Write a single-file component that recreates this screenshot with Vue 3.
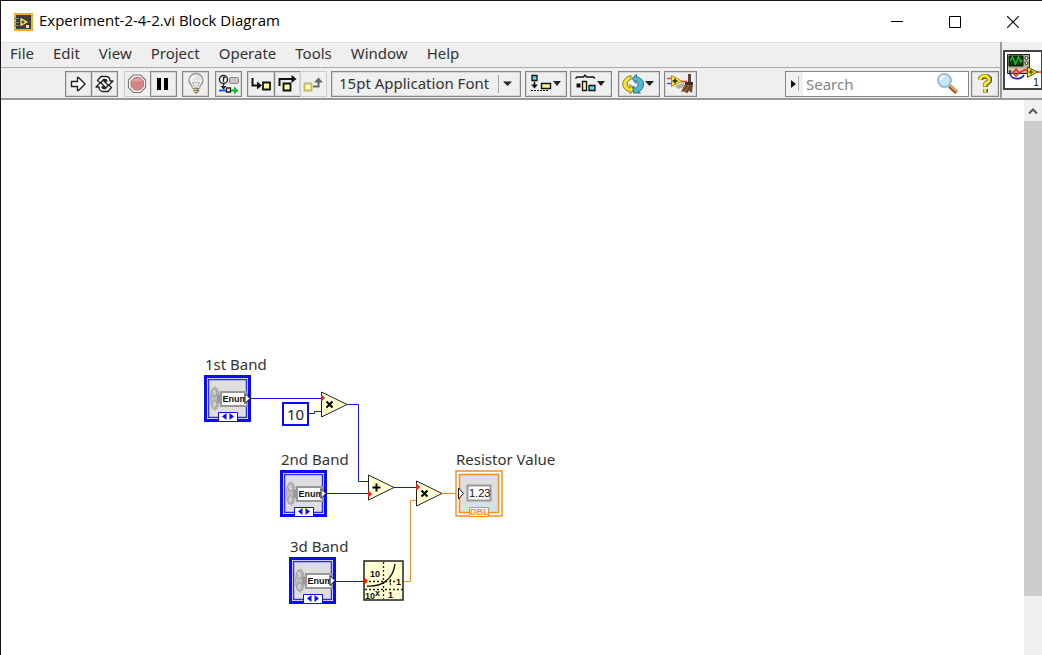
<script setup>
import { ref } from 'vue'

const menus = ['File', 'Edit', 'View', 'Project', 'Operate', 'Tools', 'Window', 'Help']
const font = ref('15pt Application Font')
const query = ref('')

const enums = [
  { label: '1st Band', x: 203, y: 275 },
  { label: '2nd Band', x: 279, y: 370 },
  { label: '3d Band', x: 288, y: 457 }
]
const operators = [
  { name: 'Multiply', x: 319, y: 291, sign: 'x', dots: [7] },
  { name: 'Add', x: 366, y: 374, sign: '+', dots: [20] },
  { name: 'Multiply', x: 414, y: 380, sign: 'x', dots: [7] }
]
const wires = [
  { kind: 'int', points: '249,298.5 321,298.5' },
  { kind: 'int', points: '308,313.5 313.5,313.5 313.5,311.5 321,311.5' },
  { kind: 'int', points: '345,304.5 357.5,304.5 357.5,381.5 368,381.5' },
  { kind: 'int', points: '325,393.5 368,393.5' },
  { kind: 'int', points: '392,387.5 416,387.5' },
  { kind: 'int', points: '334,481.5 364,481.5' },
  { kind: 'dbl', points: '440,393.5 456,393.5' },
  { kind: 'dbl', points: '402,481.5 409.5,481.5 409.5,400.5 416,400.5' }
]
const at = (n) => ({ left: n.x + 'px', top: n.y + 'px' })
</script>

<template>
  <div class="window">
    <header class="titlebar">
      <svg class="app-icon" width="19" height="18" viewBox="0 0 19 18">
        <rect x="1" y="1" width="17" height="16" fill="#3b3d40" stroke="#efb02c" stroke-width="2" />
        <path d="M0 5.5h5M0 9.5h5M0 12.5h5" stroke="#5c8fa8" />
        <path d="M6 4l9 5-9 5z" fill="#f6d66b" stroke="#1d1d1d" stroke-width=".6" />
        <path d="M7.500 9h3M9 7.500v3" stroke="#222" />
        <path d="M12 12h3v3h-3z" fill="#ddd" />
      </svg>
      <h1>Experiment-2-4-2.vi Block Diagram</h1>
      <div class="caption-buttons">
        <button aria-label="Minimize"><svg width="12" height="12"><path d="M0 5.500h12" stroke="#000" /></svg></button>
        <button aria-label="Maximize"><svg width="12" height="12"><path d="M.5.5h11v11H.5z" fill="none" stroke="#000" /></svg></button>
        <button aria-label="Close"><svg width="12" height="12"><path d="M0 0l12 12M12 0L0 12" stroke="#000" stroke-width="1.100" /></svg></button>
      </div>
    </header>

    <div class="chrome">
      <div class="bars">
        <nav class="menubar">
          <button v-for="m in menus" :key="m">{{ m }}</button>
        </nav>
        <div class="toolbar">
          <div class="group">
            <button class="tool" aria-label="Run">
              <svg width="25" height="24"><path d="M5.500 9.500h6v-4l1 0 6.500 6.500-6.500 6.500h-1v-4h-6z" fill="#fff" stroke="#222" stroke-width="1.400" /></svg>
            </button>
            <button class="tool" aria-label="Run Continuously">
              <svg width="25" height="24">
                <g fill="#fff" stroke="#222" stroke-width="1.300" stroke-linejoin="round">
                  <path d="M5.500 8.500L9 4.500h5c2.500 0 4 2 4 4.500h3l-4.500 4.500L12 9h3c-.3-1-1-1.500-2-1.500h-1.500L8.500 11z" />
                  <path d="M19.500 15.500L16 19.500h-5c-2.500 0-4-2-4-4.500H4l4.500-4.500L13 15h-3c.3 1 1 1.500 2 1.500h1.500l3-3.500z" />
                </g>
              </svg>
            </button>
          </div>
          <div class="group gap-6">
            <button class="tool faint" aria-label="Abort Execution">
              <svg width="25" height="24">
                <path d="M8.500 3h7l5 5v7.500l-5 5h-7l-5-5V8z" fill="#fff" stroke="#777" stroke-width="1.200" />
                <path d="M9.500 5.500h5.500l3.500 3.500v5.500L15 18H9.500L6 14.500V9z" fill="#d58487" stroke="#b97a7d" />
                <path d="M9.500 6.500h5l2.500 2.500H7z" fill="#e2a2a4" />
              </svg>
            </button>
            <button class="tool" aria-label="Pause">
              <svg width="25" height="24"><path d="M6 6h4v12H6zM13 6h4v12h-4z" fill="#000" /></svg>
            </button>
          </div>
          <div class="group gap-5">
            <button class="tool" aria-label="Highlight Execution">
              <svg width="25" height="24">
                <path d="M9.500 16c0-2.500-3.500-4-3.500-7.500a7 7 0 0 1 14 0c0 3.500-3.500 5-3.500 7.500z" fill="#e4e4e4" stroke="#999" stroke-width="1.400" />
                <path d="M11 16l-2-7 2.200 1.500L13 9l1.800 1.500L17 9l-2 7M8 7.500a5 5 0 0 1 4-3.500" fill="none" stroke="#fff" stroke-width="1.500" />
                <path d="M11 15l-1.500-5 2 1 1.500-1.500 1.500 1.500 2-1L15 15" fill="none" stroke="#999" stroke-width=".8" />
                <path d="M10 16h6v4h-1l-1 1.500h-2L11 20h-1z" fill="#8b8263" />
                <path d="M10 17.500h4M10 19.500h4" stroke="#d9d0a5" />
              </svg>
            </button>
          </div>
          <div class="group gap-6">
            <button class="tool" aria-label="Retain Wire Values">
              <svg width="25" height="24">
                <circle cx="7.500" cy="7.500" r="4" fill="#fff" stroke="#222" stroke-width="1.500" />
                <path d="M7.500 10V5.500h2M7.500 12v5" fill="none" stroke="#222" stroke-width="1.300" />
                <rect x="13.500" y="5.500" width="9" height="6" rx="1" fill="#c4c4c4" stroke="#888" />
                <path d="M3 18.500h7" stroke="#1557ff" stroke-width="2" />
                <path d="M7.500 17.500l3-3.500h-6z" fill="#222" />
                <path d="M10.500 16h4v4h-4z" fill="#fff" stroke="#222" stroke-width="1.300" />
                <path d="M15 18.500h3" stroke="#18a827" stroke-width="2" />
                <path d="M18 14.500l4.500 4-4.500 4z" fill="#13bd25" />
              </svg>
            </button>
          </div>
          <div class="group gap-5">
            <button class="tool wide" aria-label="Step Into">
              <svg width="25" height="24">
                <path d="M4.500 6v7.500H10" fill="none" stroke="#111" stroke-width="2" />
                <path d="M9 9.500l5 4-5 4z" fill="#111" />
                <path d="M15 10.500h7v7h-7z" fill="#fff79a" stroke="#111" stroke-width="1.800" />
              </svg>
            </button>
            <button class="tool" aria-label="Step Over">
              <svg width="25" height="24">
                <path d="M4.500 14V7H17" fill="none" stroke="#111" stroke-width="2" />
                <path d="M16.500 3l5 4-5 4z" fill="#111" />
                <path d="M8.500 11.500h7v7h-7z" fill="#fff79a" stroke="#111" stroke-width="1.800" />
              </svg>
            </button>
            <button class="tool faint" aria-label="Step Out">
              <svg width="25" height="24">
                <path d="M3.500 11.500h7v7h-7z" fill="#fffab0" stroke="#c0b96a" stroke-width="1.800" />
                <path d="M12 14.500h5.500V9" fill="none" stroke="#666" stroke-width="2" />
                <path d="M13 10.500l4.500-5 4.500 5z" fill="#666" />
              </svg>
            </button>
          </div>
          <div class="font-box gap-4">
            <select v-model="font" aria-label="Text Settings">
              <option>15pt Application Font</option>
            </select>
            <svg class="font-arrow" width="20" height="24"><path d="M2.500 3v18" stroke="#aaa" /><path d="M7 9.500h9l-4.500 4.500z" fill="#222" /></svg>
          </div>
          <div class="group gap-4">
            <button class="tool menu" aria-label="Align Objects">
              <svg width="40" height="24">
                <path d="M6 3.500h5v5H6z" fill="#66d4ee" stroke="#111" stroke-width="1.300" />
                <path d="M8.500 9.500v4" stroke="#111" stroke-width="1.500" />
                <path d="M5 12.500h7l-3.500 4z" fill="#111" />
                <path d="M5 18.500h17" stroke="#111" stroke-width="1.200" stroke-dasharray="2 1" />
                <path d="M15.500 11.500h9v5h-9z" fill="#fff48c" stroke="#111" stroke-width="1.400" />
                <path d="M27 9h8l-4 5z" fill="#222" />
              </svg>
            </button>
          </div>
          <div class="group gap-3">
            <button class="tool menu" aria-label="Distribute Objects">
              <svg width="40" height="24">
                <path d="M4.500 6.500l1.500-1.500h6.500l1.500-2 1.500 2h7l1.500 1.500" fill="none" stroke="#111" stroke-width="1.300" />
                <path d="M5.500 11.500h4v4h-4z" fill="#111" />
                <path d="M11.500 9.500h4v9h-4z" fill="#fff48c" stroke="#111" stroke-width="1.300" />
                <path d="M18 13.500h6v5h-6z" fill="#66d4ee" stroke="#111" stroke-width="1.300" />
                <path d="M26 9h8l-4 5z" fill="#222" />
              </svg>
            </button>
          </div>
          <div class="group gap-6">
            <button class="tool menu" aria-label="Reorder">
              <svg width="41" height="24">
                <path d="M12 3.500v4c-3 .5-4 3-3.500 5.500.3 1.500 1 2.500 2.500 3v-3.500l4 5-4 4.500v-2.500c-9-1-10.500-13 1-16z" fill="#f1df35" stroke="#8b7d20" />
                <path d="M17.500 2.500V5c9 1 9 12.500 2 14.500l2 1.500h-7l-.5-7 2.500 2c3-1.500 3.500-5.500.500-7.500v3l-4-5z" fill="#51b7d0" stroke="#286f82" />
                <path d="M26 9h9l-4.500 5z" fill="#222" />
              </svg>
            </button>
          </div>
          <div class="group gap-4">
            <button class="tool broom" aria-label="Clean Up Diagram">
              <svg width="31" height="24">
                <path d="M2 6.500h4M16 9.500h6" stroke="#ff3434" stroke-width="1.500" />
                <path d="M2 11.500h4" stroke="#334cff" stroke-width="1.500" />
                <path d="M23 2h3v9h-3z" fill="#5c4330" />
                <path d="M20 10h8v4h-8z" fill="#3c3027" />
                <path d="M19 13h9l-1 8-3-2-2 2.500-3-2-3 .5z" fill="#8b5e35" />
                <path d="M18 19l4-5M22 20l3-6M26 20v-6" stroke="#4d341f" />
                <path d="M10 14l9-4v5l-6 2z" fill="#b5ac9c" />
                <path d="M6.500 3.500L17 9 6.500 14.500z" fill="#f8e532" stroke="#a89520" />
                <path d="M7.500 9h5M10 6.500v5" stroke="#222" stroke-width="1.500" />
              </svg>
            </button>
          </div>
          <div class="search">
            <svg width="17" height="24"><path d="M0 0h17v24H0z" fill="#f0f0f0" /><path d="M5 8l5 4-5 4z" fill="#111" /><path d="M12.500 4v15" stroke="#aaa" /></svg>
            <input v-model="query" type="search" placeholder="Search" aria-label="Search">
            <svg width="24" height="24">
              <path d="M13.500 14l7 6.500" stroke="#8c4b2b" stroke-width="4" />
              <path d="M13.500 13l7 6.500" stroke="#e9a05c" stroke-width="2" />
              <circle cx="8.500" cy="8.500" r="6.500" fill="#c2e6fa" stroke="#9bb9cf" stroke-width="2" />
              <path d="M4.500 8a4 4 0 0 1 4-4" fill="none" stroke="#fff" stroke-width="2" />
            </svg>
          </div>
          <button class="tool help" aria-label="Context Help">
            <svg width="26" height="24">
              <g fill="none" stroke-linejoin="round">
                <path d="M8.500 8V6.500L11 4.500h4L17.500 6.500V9L13.500 12v3M13.500 17v3.500" stroke="#555" stroke-width="5" />
                <path d="M8 8V6.500L10.500 4h4L17 6.500V9L13 12v2.500M13 17v3" stroke="#f7eb16" stroke-width="3" />
              </g>
            </svg>
          </button>
        </div>
      </div>
      <aside class="vi-pane">
        <svg width="39" height="40" viewBox="0 0 39 40">
          <rect x="1" y="1" width="38" height="38" fill="#fff" stroke="#444" stroke-width="2" />
          <path d="M4.500 4.500h22v19h-22z" fill="#b6b394" stroke="#222" />
          <path d="M6 6h14v10H6z" fill="#073d0d" stroke="#111" />
          <path d="M7 11l2.500-4 3 7 3-7 2.500 5 1-2" fill="none" stroke="#20bd38" stroke-width="1.400" />
          <g fill="#eee" stroke="#333"><circle cx="23.500" cy="8" r="1.500" /><circle cx="23.500" cy="13" r="1.500" /></g>
          <path d="M5 19.500h20" stroke="#ddd9b9" stroke-width="2" />
          <path d="M5 23.500h22" stroke="#222" />
          <path d="M7 20v4c2 6 11 6 14 1" fill="none" stroke="#172496" stroke-width="1.600" />
          <path d="M10 23l3-4 3 4-3 3zM15 23c4 0 5-5 10-3M33 22h6" fill="none" stroke="#f32828" stroke-width="1.600" />
          <path d="M24.500 17v10.500l10-5.500z" fill="#f4ea24" stroke="#5a5512" />
          <path d="M25.500 22h5M28 19.500v5" stroke="#222" />
          <text class="vi-number" x="30" y="36">1</text>
        </svg>
      </aside>
    </div>

    <main class="editor">
      <section class="canvas" aria-label="Block diagram">
        <svg class="wires" width="620" height="520">
          <polyline v-for="w in wires" :key="w.points" :class="w.kind" :points="w.points" />
        </svg>

        <div v-for="n in enums" :key="n.label" class="node" :style="at(n)">
          <span class="label">{{ n.label }}</span>
          <svg width="47" height="47">
            <rect x="1.500" y="1.500" width="44" height="44" fill="#fff" stroke="#0a0aff" stroke-width="3" />
            <rect x="4.500" y="4.500" width="38" height="38" fill="#dedede" stroke="#2a2aff" stroke-width="1.500" />
            <ellipse cx="11" cy="23.500" rx="4.500" ry="11.500" fill="#bcbcbc" stroke="#999" stroke-dasharray="2 1" />
            <path d="M8 18c-1-5 4-6 5 0l-1 3H9zM8 29c-1 5 4 6 5 0l-1-3H9z" fill="#cfcfcf" stroke="#9a9a9a" />
            <path d="M13 23.500h5" stroke="#999" stroke-width="8" />
            <rect x="17" y="17" width="26" height="14" fill="#fff" stroke="#999" stroke-width="2" />
            <text class="glyph" x="18.500" y="27">Enum</text>
            <path d="M41 18.500l5 5-5 5z" fill="#fff" stroke="#111" />
            <path d="M14.500 37.500h19v9h-19z" fill="#fff" stroke="#0a0aff" />
            <path d="M22.500 38v7L18 41.500zM25.500 38v7l4.500-3.500z" fill="#0a0aff" />
          </svg>
        </div>

        <div class="constant">10</div>

        <svg v-for="n in operators" :key="n.x" class="node" :style="at(n)" width="28" height="28" :aria-label="n.name">
          <path d="M1.500 1v25L27 13.500z" fill="#ffffd2" stroke="#222" />
          <path v-if="n.sign === 'x'" d="M6.500 10.500l6 6M12.500 10.500l-6 6" stroke="#000" stroke-width="2" />
          <path v-else d="M5.500 13.500h8M9.500 9.500v8" stroke="#000" stroke-width="2" />
          <path v-for="y in n.dots" :key="y" :d="`M1 ${y - 3}h1l3 3-3 3H1z`" fill="#ff1515" />
        </svg>

        <svg class="node power" width="41" height="41" aria-label="Power of 10">
          <rect x="1" y="1" width="39" height="39" fill="#ffffd2" stroke="#222" stroke-width="1.500" />
          <path d="M20.500 2v37M2 21.500h30M27.500 15v12M2 29.500h38" stroke="#222" stroke-width="1.300" stroke-dasharray="2 2" fill="none" />
          <path d="M4 26c14 1 26-6 28-22" fill="none" stroke="#111" stroke-width="1.400" />
          <text class="glyph" x="7" y="17">10</text>
          <text class="glyph" x="33" y="25">1</text>
          <text class="glyph" x="2" y="39">10</text>
          <text class="glyph" x="12" y="36">x</text>
          <text class="glyph" x="25" y="38">1</text>
          <path d="M1 18h1l3 3-3 3H1z" fill="#ff1515" />
        </svg>

        <div class="node result">
          <span class="label">Resistor Value</span>
          <svg width="48" height="47">
            <rect x="1" y="1" width="46" height="45" fill="#fff" stroke="#ff8b24" stroke-width="1.500" />
            <rect x="4.500" y="4.500" width="39" height="38" fill="#dedede" stroke="#ff8b24" stroke-width="1.500" />
            <rect x="12.500" y="15.500" width="23" height="15" fill="#fff" stroke="#999" stroke-width="2" />
            <text class="value" x="14" y="27">1.23</text>
            <path d="M3.500 18v11l5-5.500z" fill="#fff" stroke="#111" />
            <path d="M14.500 37.500h19v9h-19z" fill="#fff" stroke="#ff8b24" />
            <text class="type" x="15" y="45">DBL</text>
          </svg>
        </div>
      </section>
      <div class="scrollbar">
        <button aria-label="Scroll up"><svg width="10" height="8"><path d="M1 6.500l4-4 4 4" fill="none" stroke="#555" stroke-width="2" /></svg></button>
        <div class="track"><div class="thumb"></div></div>
      </div>
    </main>
  </div>
</template>

<style>
body { margin: 0; background: #fff; }
</style>

<style scoped>
.window {
  box-sizing: border-box;
  min-height: 100vh;
  display: flex;
  flex-direction: column;
  border-top: 1px solid #16121a;
  border-left: 1px solid #16121a;
  background: #fff;
  color: #222;
  font-family: "Noto Sans", "Open Sans", sans-serif;
  font-size: 15px;
}
button, input, select { font: inherit; color: inherit; margin: 0; padding: 0; border: 0; background: none; border-radius: 0; }
svg { display: block; flex: none; }

.titlebar { display: flex; align-items: center; height: 41px; padding-left: 13px; }
.titlebar h1 { margin: 0 0 0 6px; padding-bottom: 4px; font: 400 15px/20px "Open Sans", sans-serif; color: #000; }
.caption-buttons { display: flex; margin-left: auto; }
.caption-buttons button { width: 58px; height: 40px; display: flex; align-items: center; justify-content: center; }

.chrome { display: flex; background: #efefef; border-bottom: 2px solid #999; }
.bars { flex: 1; min-width: 0; border-top: 1px solid #e0e0e0; }
.menubar { display: flex; gap: 19px; height: 24px; padding-left: 9px; border-bottom: 1px solid #aaa; }
.menubar button { height: 20px; line-height: 20px; color: #333; }
.toolbar { box-sizing: border-box; display: flex; align-items: center; height: 30px; padding: 2px 1px 0 64px; }
.group { display: flex; }
.tool { box-sizing: border-box; display: flex; width: 27px; height: 26px; border: 1px solid #858585; box-shadow: inset 0 0 0 1px #d6d6d6; }
.tool + .tool { margin-left: -1px; }
.tool.faint { border-color: #ccc; box-shadow: none; }
.tool.wide { width: 28px; }
.tool.menu { width: 42px; }
.tool.broom { width: 33px; }
.tool.help { width: 28px; margin-left: 2px; }
.gap-3 { margin-left: 3px; }
.gap-4 { margin-left: 4px; }
.gap-5 { margin-left: 5px; }
.gap-6 { margin-left: 6px; }
.font-box { position: relative; box-sizing: border-box; width: 190px; height: 26px; border: 1px solid #858585; box-shadow: inset 0 0 0 1px #d6d6d6; }
.font-box select { appearance: none; width: 100%; height: 22px; padding-left: 7px; line-height: 22px; color: #333; }
.font-arrow { position: absolute; right: 4px; top: 0; pointer-events: none; }
.search { box-sizing: border-box; display: flex; width: 184px; height: 26px; margin-left: auto; padding-right: 8px; border: 1px solid #858585; background: #fff; }
.search input { flex: 1; min-width: 0; padding-left: 3px; outline: 0; appearance: none; }
.search input::placeholder { color: #858585; opacity: 1; }
.vi-pane { display: flex; align-items: center; padding-left: 1px; border-left: 2px solid #999; }
.vi-number { font: 11px "Liberation Sans", sans-serif; fill: #222; }

.editor { flex: 1; display: flex; }
.canvas { position: relative; flex: 1; min-height: 520px; overflow: hidden; }
.node, .wires { position: absolute; }
.wires { left: 0; top: 0; }
.wires polyline { fill: none; stroke-width: 1; }
.wires .int { stroke: #1414ff; }
.wires .dbl { stroke: #ff8b24; }
.label { position: absolute; left: 1px; bottom: 100%; line-height: 22px; white-space: nowrap; color: #333; }
.constant { position: absolute; left: 281px; top: 302px; box-sizing: border-box; width: 27px; height: 24px; border: 2px solid #0a0aff; line-height: 20px; text-align: center; background: #fff; }
.power { left: 362px; top: 460px; }
.result { left: 454px; top: 370px; }
.glyph { font: bold 9px "Liberation Sans", sans-serif; fill: #111; }
.value { font: 11px "Liberation Sans", sans-serif; fill: #111; }
.type { font: bold 9px "Liberation Sans", sans-serif; fill: #ff8b24; }

.scrollbar { width: 18px; display: flex; flex-direction: column; background: #f0f0f0; }
.scrollbar button { height: 21px; display: flex; align-items: center; justify-content: center; }
.track { flex: 1; display: flex; flex-direction: column; }
.thumb { flex: 0 0 89%; background: #cdcdcd; }
</style>
